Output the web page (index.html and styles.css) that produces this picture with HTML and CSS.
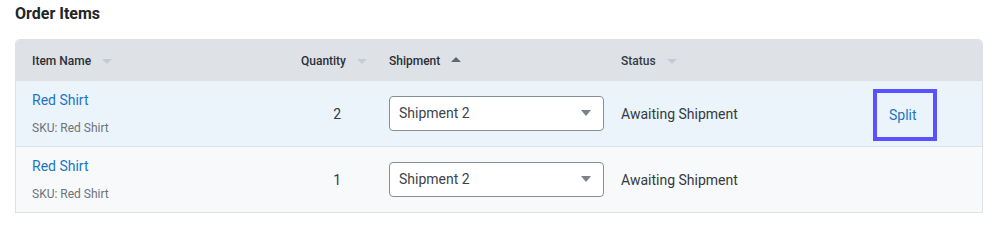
FILE: index.html
```html
<!DOCTYPE html>
<html>
<head>
<meta charset="utf-8">
<link rel="stylesheet" href="styles.css">
</head>
<body>
<div class="page">
  <h2 class="title">Order Items</h2>
  <div class="table">
    <div class="row head">
      <div class="cell c-name"><span>Item Name</span><span class="sort"></span></div>
      <div class="cell c-qty"><span>Quantity</span><span class="sort"></span></div>
      <div class="cell c-ship"><span>Shipment</span><span class="sort up"></span></div>
      <div class="cell c-status"><span>Status</span><span class="sort"></span></div>
      <div class="cell c-act"></div>
    </div>
    <div class="row body active">
      <div class="cell c-name">
        <a class="link">Red Shirt</a>
        <div class="sku">SKU: Red Shirt</div>
      </div>
      <div class="cell c-qty">2</div>
      <div class="cell c-ship">
        <div class="select"><span>Shipment 2</span><span class="caret"></span></div>
      </div>
      <div class="cell c-status">Awaiting Shipment</div>
      <div class="cell c-act"><a class="split">Split</a></div>
    </div>
    <div class="row body alt">
      <div class="cell c-name">
        <a class="link">Red Shirt</a>
        <div class="sku">SKU: Red Shirt</div>
      </div>
      <div class="cell c-qty">1</div>
      <div class="cell c-ship">
        <div class="select"><span>Shipment 2</span><span class="caret"></span></div>
      </div>
      <div class="cell c-status">Awaiting Shipment</div>
      <div class="cell c-act"></div>
    </div>
  </div>
</div>
</body>
</html>
```

FILE: styles.css
```css
* { box-sizing: border-box; }
html, body { margin: 0; padding: 0; background: #ffffff; }
body {
  font-family: Roboto, "Liberation Sans", Arial, sans-serif;
  color: #343a40;
  overflow: hidden;
}
.page { padding: 0 15px; }
.title {
  margin: 0;
  padding-top: 4px;
  height: 39px;
  font-size: 16px;
  line-height: 20px;
  font-weight: 700;
  color: #212529;
}
.table {
  border: 1px solid #dee2e6;
  border-bottom: none;
  border-radius: 5px 5px 0 0;
  overflow: hidden;
}
.row {
  display: grid;
  grid-template-columns: 257px 100px 232px 252px 1fr;
}
.head {
  height: 41px;
  background: #dee2e6;
  font-size: 12px;
  font-weight: 500;
  color: #2b3036;
}
.head .cell {
  display: flex;
  align-items: center;
  padding: 0 16px;
}
.head .c-qty { justify-content: flex-end; padding-right: 6px; }
.sort {
  width: 0; height: 0;
  margin-left: 11px;
  border-left: 5px solid transparent;
  border-right: 5px solid transparent;
  border-top: 5px solid #c5cbd1;
  margin-top: 1px;
}
.sort.up {
  border-top: none;
  border-bottom: 5px solid #5f6770;
  margin-top: -2px;
}
.body {
  height: 66px;
  border-bottom: 1px solid #dee2e6;
  font-size: 14px;
}
.body.active { background: #ebf4fb; }
.body.alt { background: #f7f9fb; }
.body .cell {
  display: flex;
  align-items: center;
  padding: 0 16px;
}
.body .c-name {
  flex-direction: column;
  align-items: flex-start;
  justify-content: flex-start;
  padding-top: 9px;
}
.link {
  color: #1a76c3;
  font-size: 14px;
  line-height: 20px;
  text-decoration: none;
}
.sku {
  margin-top: 9px;
  font-size: 12px;
  line-height: 18px;
  color: #6b737b;
}
.body .c-qty {
  justify-content: flex-end;
  padding-right: 32px;
  color: #343a40;
}
.body .c-ship { padding-right: 0; }
.select {
  flex: 0 0 215px;
  width: 215px;
  height: 35px;
  border: 1px solid #868e96;
  border-radius: 4px;
  background: #ffffff;
  display: flex;
  align-items: center;
  justify-content: space-between;
  padding: 0 12px 0 9px;
  color: #3d434a;
  margin-top: -1px;
}
.caret {
  width: 0; height: 0;
  border-left: 5px solid transparent;
  border-right: 5px solid transparent;
  border-top: 6px solid #7a828b;
}
.c-status { color: #343a40; }
.split {
  display: flex;
  align-items: center;
  width: 64px;
  height: 52px;
  border: 4px solid #5b52ff;
  padding-left: 12px;
  color: #1a76c3;
  font-size: 14px;
  margin-top: 3px;
}
```
